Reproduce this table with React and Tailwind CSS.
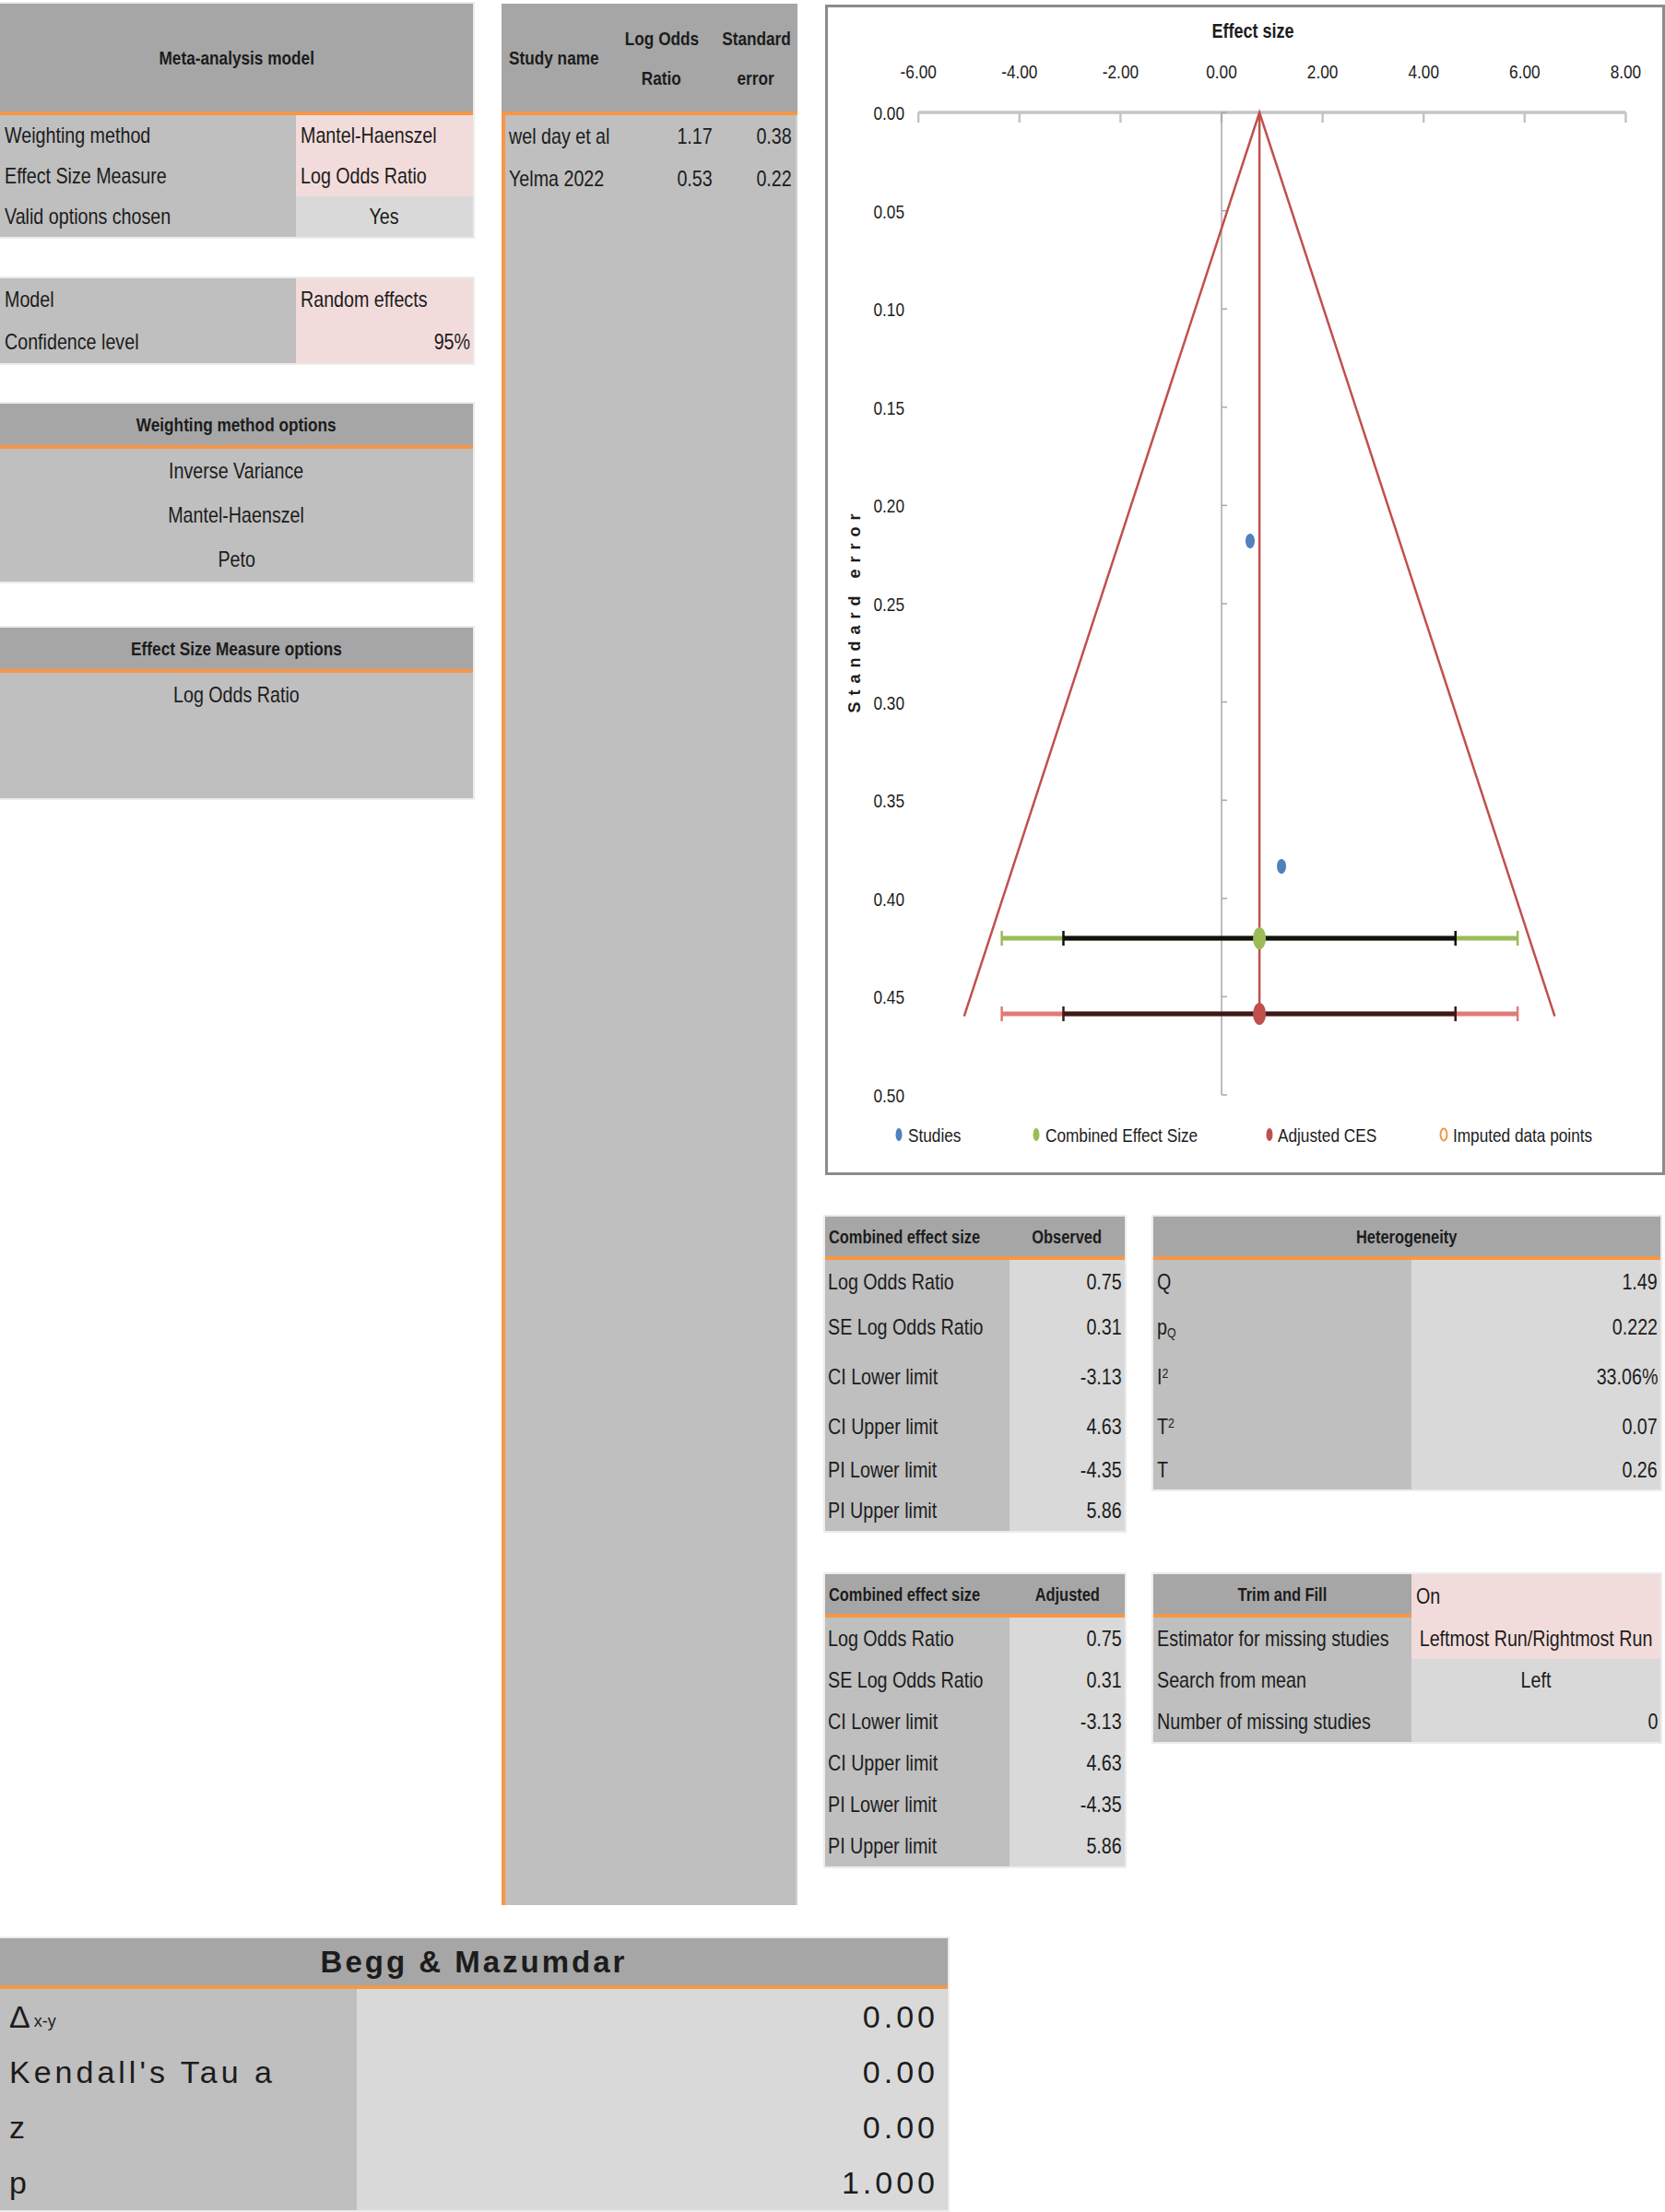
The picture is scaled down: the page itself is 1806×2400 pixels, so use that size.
import React from 'react';

// the sheet font is a narrow one; squeeze Liberation Sans to match it
const N = ({ children, o = 'origin-left' }) => (
  <span className={`inline-block whitespace-nowrap scale-x-[0.82] ${o}`}>{children}</span>
);

const metaRows = [
  { label: 'Weighting method', value: 'Mantel-Haenszel', cell: 'bg-[#f2dcdb] justify-start pl-[5px]', o: 'origin-left' },
  { label: 'Effect Size Measure', value: 'Log Odds Ratio', cell: 'bg-[#f2dcdb] justify-start pl-[5px]', o: 'origin-left' },
  { label: 'Valid options chosen', value: 'Yes', cell: 'bg-[#d9d9d9] justify-center', o: 'origin-center' },
];

const modelRows = [
  { label: 'Model', value: 'Random effects', cell: 'bg-[#f2dcdb] justify-start pl-[5px]', o: 'origin-left' },
  { label: 'Confidence level', value: '95%', cell: 'bg-[#f2dcdb] justify-end pr-[3px]', o: 'origin-right' },
];

const studies = [
  { name: 'wel day et al', lor: '1.17', se: '0.38' },
  { name: 'Yelma 2022', lor: '0.53', se: '0.22' },
];

// row heights follow the spreadsheet rows (shared by the two upper tables)
const obsRows = [
  { label: 'Log Odds Ratio', value: '0.75', h: 'h-[47px]' },
  { label: 'SE Log Odds Ratio', value: '0.31', h: 'h-[51px]' },
  { label: 'CI Lower limit', value: '-3.13', h: 'h-[58px]' },
  { label: 'CI Upper limit', value: '4.63', h: 'h-[50px]' },
  { label: 'PI Lower limit', value: '-4.35', h: 'h-[43px]' },
  { label: 'PI Upper limit', value: '5.86', h: 'h-[45px]' },
];

const hetRows = [
  { label: 'Q', value: '1.49', h: 'h-[47px]' },
  { label: <>p<sub className="text-[15px]">Q</sub></>, value: '0.222', h: 'h-[51px]' },
  { label: <>I<sup className="text-[15px]">2</sup></>, value: '33.06%', h: 'h-[58px]' },
  { label: <>T<sup className="text-[15px]">2</sup></>, value: '0.07', h: 'h-[50px]' },
  { label: 'T', value: '0.26', h: 'h-[43px]' },
];

const adjRows = [
  { label: 'Log Odds Ratio', value: '0.75' },
  { label: 'SE Log Odds Ratio', value: '0.31' },
  { label: 'CI Lower limit', value: '-3.13' },
  { label: 'CI Upper limit', value: '4.63' },
  { label: 'PI Lower limit', value: '-4.35' },
  { label: 'PI Upper limit', value: '5.86' },
];

const trimRows = [
  { label: 'Estimator for missing studies', value: 'Leftmost Run/Rightmost Run', cell: 'bg-[#f2dcdb] justify-center', o: 'origin-center' },
  { label: 'Search from mean', value: 'Left', cell: 'bg-[#d9d9d9] justify-center', o: 'origin-center' },
  { label: 'Number of missing studies', value: '0', cell: 'bg-[#d9d9d9] justify-end pr-[3px]', o: 'origin-right' },
];

const beggRows = [
  { label: <>Δ<sub className="text-[18px] tracking-normal">x-y</sub></>, value: '0.00', key: 'd' },
  { label: "Kendall's Tau a", value: '0.00', key: 'k' },
  { label: 'z', value: '0.00', key: 'z' },
  { label: 'p', value: '1.000', key: 'p' },
];

const MetaTable = () => (
  <div className="ring-2 ring-[#ececec]">
    <div className="h-[121px] bg-[#a6a6a6] border-b-4 border-[#f79646] flex items-center justify-center text-[21px] font-bold">
      <N o="origin-center">Meta-analysis model</N>
    </div>
    {metaRows.map((r) => (
      <div key={r.label} className="flex h-[44px]">
        <div className="w-[321px] bg-[#bfbfbf] flex items-center pl-[5px]"><N>{r.label}</N></div>
        <div className={`flex-1 min-w-0 flex items-center ${r.cell}`}><N o={r.o}>{r.value}</N></div>
      </div>
    ))}
  </div>
);

const ModelTable = () => (
  <div className="mt-[45px] ring-2 ring-[#ececec]">
    {modelRows.map((r) => (
      <div key={r.label} className="flex h-[46px]">
        <div className="w-[321px] bg-[#bfbfbf] flex items-center pl-[5px]"><N>{r.label}</N></div>
        <div className={`flex-1 min-w-0 flex items-center ${r.cell}`}><N o={r.o}>{r.value}</N></div>
      </div>
    ))}
  </div>
);

const OptionsTable = ({ title, options, className, bodyH }) => (
  <div className={`ring-2 ring-[#ececec] ${className}`}>
    <div className="h-[49px] bg-[#a6a6a6] border-b-4 border-[#f79646] flex items-center justify-center text-[21px] font-bold">
      <N o="origin-center">{title}</N>
    </div>
    <div className={`bg-[#bfbfbf] ${bodyH}`}>
      {options.map((o) => (
        <div key={o} className="h-[48px] flex items-center justify-center"><N o="origin-center">{o}</N></div>
      ))}
    </div>
  </div>
);

const LeftColumn = () => (
  <div className="w-[513px] flex flex-col">
    <MetaTable />
    <ModelTable />
    <OptionsTable
      title="Weighting method options"
      options={['Inverse Variance', 'Mantel-Haenszel', 'Peto']}
      className="mt-[44px]"
      bodyH="h-[144px]"
    />
    <OptionsTable
      title="Effect Size Measure options"
      options={['Log Odds Ratio']}
      className="mt-[50px]"
      bodyH="h-[136px]"
    />
  </div>
);

const StudyPanel = () => (
  <div className="ml-[31px] w-[321px] h-[2063px] flex flex-col">
    <div className="h-[121px] bg-[#a6a6a6] border-b-4 border-[#f79646] flex items-center text-[21px] font-bold">
      <div className="w-[116px] pl-[8px]"><N>Study name</N></div>
      <div className="w-[115px] flex flex-col items-center leading-[43px]">
        <N o="origin-center">Log Odds</N>
        <N o="origin-center">Ratio</N>
      </div>
      <div className="w-[90px] flex flex-col items-center leading-[43px]">
        <N o="origin-center">Standard</N>
        <N o="origin-center">error</N>
      </div>
    </div>
    <div className="flex-1 bg-[#bfbfbf] border-l-4 border-l-[#f79646] border-r-2 border-r-[#cfcfcf]">
      {studies.map((s) => (
        <div key={s.name} className="flex h-[46px] items-center">
          <div className="w-[112px] pl-[4px]"><N>{s.name}</N></div>
          <div className="w-[113px] flex justify-end"><N o="origin-right">{s.lor}</N></div>
          <div className="w-[86px] flex justify-end"><N o="origin-right">{s.se}</N></div>
        </div>
      ))}
    </div>
  </div>
);

// chart scales, in px of the chart box
const xs = (v) => 430 + v * 54.8;
const ys = (se) => 117 + se * 2132;

const NText = ({ x, y, anchor = 'start', size = 21, bold = false, children }) => (
  <text
    transform={`translate(${x} ${y}) scale(0.82 1)`}
    textAnchor={anchor}
    fontSize={size}
    fontWeight={bold ? 'bold' : 'normal'}
  >
    {children}
  </text>
);

const ErrorBar = ({ y, outer, inner, marker }) => (
  <g>
    <line x1={xs(-4.35)} y1={y} x2={xs(5.86)} y2={y} stroke={outer} strokeWidth="5" />
    <line x1={xs(-4.35)} y1={y - 8} x2={xs(-4.35)} y2={y + 8} stroke={outer} strokeWidth="2.5" />
    <line x1={xs(5.86)} y1={y - 8} x2={xs(5.86)} y2={y + 8} stroke={outer} strokeWidth="2.5" />
    <line x1={xs(-3.13)} y1={y} x2={xs(4.63)} y2={y} stroke={inner} strokeWidth="5" />
    <line x1={xs(-3.13)} y1={y - 8} x2={xs(-3.13)} y2={y + 8} stroke={inner} strokeWidth="2.5" />
    <line x1={xs(4.63)} y1={y - 8} x2={xs(4.63)} y2={y + 8} stroke={inner} strokeWidth="2.5" />
    <ellipse cx={xs(0.75)} cy={y} rx="7" ry="12" fill={marker} />
  </g>
);

const FunnelChart = () => {
  const xTicks = [-6, -4, -2, 0, 2, 4, 6, 8];
  const yTicks = Array.from({ length: 11 }, (_, i) => i * 0.05);
  const apex = xs(0.75);
  const bottom = ys(0.46);
  return (
    <div className="relative mt-[1px] h-[1270px] border-[3px] border-[#8c8c8c] bg-white">
      <svg
        className="absolute left-[-3px] top-[-3px]"
        width="911"
        height="1270"
        fontFamily="'Liberation Sans', sans-serif"
        fill="#1c1c1c"
      >
        <NText x={464} y={36} anchor="middle" size={22} bold>Effect size</NText>
        {xTicks.map((t) => (
          <g key={t}>
            <NText x={xs(t)} y={80} anchor="middle">{t.toFixed(2)}</NText>
            <line x1={xs(t)} y1="117" x2={xs(t)} y2="128" stroke="#c4c4c4" strokeWidth="2.5" />
          </g>
        ))}
        <line x1={xs(-6)} y1="117" x2={xs(8)} y2="117" stroke="#c4c4c4" strokeWidth="3.5" />
        <line x1="430" y1="117" x2="430" y2={ys(0.5)} stroke="#a8a8a8" strokeWidth="1.5" />
        {yTicks.map((t) => (
          <g key={t}>
            <NText x={86} y={ys(t) + 8} anchor="end">{t.toFixed(2)}</NText>
            <line x1="430" y1={ys(t)} x2="436" y2={ys(t)} stroke="#a8a8a8" strokeWidth="1.5" />
          </g>
        ))}
        <text
          x="38"
          y="657"
          transform="rotate(-90 38 657)"
          textAnchor="middle"
          fontSize="18"
          fontWeight="bold"
          letterSpacing="7"
        >
          Standard error
        </text>
        <polyline
          points={`${xs(-5.095)},${bottom} ${apex},117 ${xs(6.595)},${bottom}`}
          fill="none"
          stroke="#c0504d"
          strokeWidth="2.5"
        />
        <line x1={apex} y1="117" x2={apex} y2={bottom} stroke="#c0504d" strokeWidth="2.5" />
        <ellipse cx="461" cy="582" rx="5" ry="8" fill="#4f81bd" />
        <ellipse cx="495" cy="935" rx="5" ry="8" fill="#4f81bd" />
        <ErrorBar y={1013} outer="#9bbb59" inner="#111111" marker="#9bbb59" />
        <ErrorBar y={1095} outer="#e07b78" inner="#3b1a1a" marker="#c0504d" />
        <ellipse cx="80" cy="1226" rx="3.5" ry="7" fill="#4f81bd" />
        <NText x={90} y={1234}>Studies</NText>
        <ellipse cx="229" cy="1226" rx="3.5" ry="7" fill="#9bbb59" />
        <NText x={239} y={1234}>Combined Effect Size</NText>
        <ellipse cx="482" cy="1226" rx="3.5" ry="7" fill="#c0504d" />
        <NText x={491} y={1234}>Adjusted CES</NText>
        <ellipse cx="671" cy="1226" rx="3.5" ry="6.5" fill="none" stroke="#f79646" strokeWidth="2" />
        <NText x={681} y={1234}>Imputed data points</NText>
      </svg>
    </div>
  );
};

const ObservedTable = ({ head, rows }) => (
  <div className="w-[325px] ring-2 ring-[#ececec]">
    <div className="h-[47px] bg-[#a6a6a6] border-b-4 border-[#f79646] flex items-center text-[20px] font-bold">
      <div className="w-[200px] pl-[4px]"><N>Combined effect size</N></div>
      <div className="flex-1 min-w-0 flex justify-center"><N o="origin-center">{head}</N></div>
    </div>
    {rows.map((r) => (
      <div key={r.label} className={`flex ${r.h || 'h-[45px]'}`}>
        <div className="w-[200px] bg-[#bfbfbf] flex items-center pl-[3px]"><N>{r.label}</N></div>
        <div className="flex-1 min-w-0 bg-[#d9d9d9] flex items-center justify-end pr-[3px]"><N o="origin-right">{r.value}</N></div>
      </div>
    ))}
  </div>
);

const HeterogeneityTable = () => (
  <div className="w-[550px] ring-2 ring-[#ececec]">
    <div className="h-[47px] bg-[#a6a6a6] border-b-4 border-[#f79646] flex items-center justify-center text-[20px] font-bold">
      <N o="origin-center">Heterogeneity</N>
    </div>
    {hetRows.map((r) => (
      <div key={r.value} className={`flex ${r.h}`}>
        <div className="w-[280px] bg-[#bfbfbf] flex items-center pl-[4px]"><N>{r.label}</N></div>
        <div className="flex-1 min-w-0 bg-[#d9d9d9] flex items-center justify-end pr-[3px]"><N o="origin-right">{r.value}</N></div>
      </div>
    ))}
  </div>
);

const TrimFillTable = () => (
  <div className="w-[550px] ring-2 ring-[#ececec]">
    <div className="flex h-[47px]">
      <div className="w-[280px] bg-[#a6a6a6] border-b-4 border-[#f79646] flex items-center justify-center text-[20px] font-bold">
        <N o="origin-center">Trim and Fill</N>
      </div>
      <div className="flex-1 min-w-0 bg-[#f2dcdb] flex items-center pl-[5px]"><N>On</N></div>
    </div>
    {trimRows.map((r) => (
      <div key={r.label} className="flex h-[45px]">
        <div className="w-[280px] shrink-0 bg-[#bfbfbf] flex items-center pl-[4px]"><N>{r.label}</N></div>
        <div className={`flex-1 min-w-0 flex items-center ${r.cell}`}><N o={r.o}>{r.value}</N></div>
      </div>
    ))}
  </div>
);

const RightColumn = () => (
  <div className="ml-[30px] w-[911px] flex flex-col">
    <FunnelChart />
    <div className="mt-[45px] flex items-start gap-[31px]">
      <ObservedTable head="Observed" rows={obsRows} />
      <HeterogeneityTable />
    </div>
    <div className="mt-[47px] flex items-start gap-[31px]">
      <ObservedTable head="Adjusted" rows={adjRows} />
      <TrimFillTable />
    </div>
  </div>
);

const BeggTable = () => (
  <div className="mt-[36px] w-[1028px] ring-2 ring-[#ececec] text-[34px] tracking-[4px]">
    <div className="h-[55px] bg-[#a6a6a6] border-b-4 border-[#f79646] flex items-center justify-center text-[33px] font-bold tracking-[3px]">
      Begg &amp; Mazumdar
    </div>
    {beggRows.map((r) => (
      <div key={r.key} className="flex h-[60px]">
        <div className="w-[387px] bg-[#bfbfbf] flex items-center pl-[10px]">{r.label}</div>
        <div className="flex-1 bg-[#d9d9d9] flex items-center justify-end pr-[10px]">{r.value}</div>
      </div>
    ))}
  </div>
);

export default function App() {
  return (
    <div className="w-[1806px] h-[2400px] bg-white overflow-hidden text-[#1c1c1c] font-['Liberation_Sans',Arial,sans-serif] text-[24px]">
      <div className="flex items-start pt-[4px]">
        <LeftColumn />
        <StudyPanel />
        <RightColumn />
      </div>
      <BeggTable />
    </div>
  );
}
